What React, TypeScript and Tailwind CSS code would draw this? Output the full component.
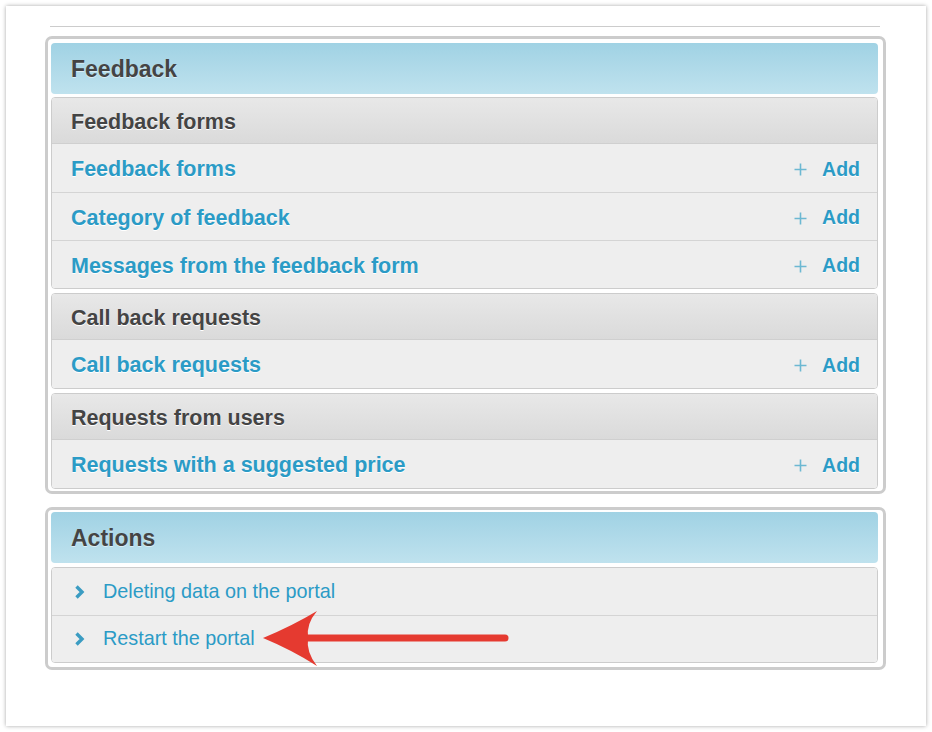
import React from "react";

const font = { fontFamily: '"Liberation Sans", Arial, sans-serif' };

function Plus() {
  return (
    <svg width="13" height="13" viewBox="0 0 13 13" className="mr-[15px]">
      <path d="M6.5 0.5V12.5M0.5 6.5H12.5" stroke="#6cb8d2" strokeWidth="1.6" fill="none" />
    </svg>
  );
}

function Chevron() {
  return (
    <svg width="11" height="16" viewBox="0 0 11 16" className="ml-[3px] mr-[18px]">
      <path d="M2.5 2.5L8 8L2.5 13.5" stroke="#3b9cc2" strokeWidth="3.4" fill="none" strokeLinejoin="miter" />
    </svg>
  );
}

function LinkRow({ label, first }: { label: string; first?: boolean }) {
  return (
    <div
      className={
        "h-[48px] flex items-center justify-between pt-[3px] pl-[19px] pr-[17px] bg-[#eeeeee] " +
        (first ? "" : "border-t border-[#d4d4d4]")
      }
    >
      <span className="text-[21.5px] font-bold text-[#2b9bc6] [text-shadow:0_1px_0_#fff]">{label}</span>
      <span className="flex items-center">
        <Plus />
        <span className="text-[19.5px] font-bold text-[#2b9bc6] [text-shadow:0_1px_0_#fff]">Add</span>
      </span>
    </div>
  );
}

function SubSection({ title, rows }: { title: string; rows: string[] }) {
  return (
    <div className="border border-[#cccccc] rounded-[4px] overflow-hidden">
      <div className="h-[46px] flex items-center pt-[4px] pl-[19px] bg-gradient-to-b from-[#e8e8e8] to-[#dadada] border-b border-[#cfcfcf]">
        <span className="text-[21.5px] font-bold text-[#444444] [text-shadow:0_1px_0_#fff]">{title}</span>
      </div>
      {rows.map((r, i) => (
        <LinkRow key={r} label={r} first={i === 0} />
      ))}
    </div>
  );
}

function PanelHeader({ title }: { title: string }) {
  return (
    <div className="h-[51px] flex items-center pt-[2px] pl-[20px] rounded-[4px] bg-gradient-to-b from-[#a0d2e4] to-[#bfe2ee]">
      <span className="text-[23px] font-bold text-[#444444] [text-shadow:0_1px_0_rgba(255,255,255,0.5)]">{title}</span>
    </div>
  );
}

function ActionRow({ label, first }: { label: string; first?: boolean }) {
  return (
    <div
      className={
        "h-[47px] flex items-center pl-[19px] bg-[#eeeeee] " + (first ? "" : "border-t border-[#d4d4d4]")
      }
    >
      <Chevron />
      <span className="text-[19.8px] text-[#2b9bc6]">{label}</span>
    </div>
  );
}

export default function App() {
  return (
    <div className="relative w-[932px] h-[732px] bg-white p-[6px]" style={font}>
      <div className="w-[920px] h-[720px] bg-white shadow-[0_0_4px_rgba(0,0,0,0.35)] pt-[20px] pl-[39px]">
        <div className="w-[830px] ml-[5px] h-px bg-[#cccccc]" />
        <div className="mt-[9px] w-[841px] border-[3px] border-[#cccccc] rounded-[7px] pt-[4px] pl-[3px] pr-[5px] pb-[2px] bg-white">
          <PanelHeader title="Feedback" />
          <div className="mt-[3px] flex flex-col gap-[4px]">
            <SubSection
              title="Feedback forms"
              rows={["Feedback forms", "Category of feedback", "Messages from the feedback form"]}
            />
            <SubSection title="Call back requests" rows={["Call back requests"]} />
            <SubSection title="Requests from users" rows={["Requests with a suggested price"]} />
          </div>
        </div>
        <div className="mt-[13px] w-[841px] border-[3px] border-[#cccccc] rounded-[7px] pt-[2px] pl-[3px] pr-[5px] pb-[4px] bg-white">
          <PanelHeader title="Actions" />
          <div className="mt-[4px] border border-[#cccccc] rounded-[4px] overflow-hidden">
            <ActionRow label="Deleting data on the portal" first />
            <ActionRow label="Restart the portal" />
          </div>
        </div>
      </div>
      <svg className="absolute left-0 top-0 pointer-events-none" width="932" height="732" viewBox="0 0 932 732">
        <line x1="306" y1="638" x2="505" y2="638" stroke="#e53a30" strokeWidth="7" strokeLinecap="round" />
        <path d="M263 638 Q292 626 317 611 Q306 624 308 638 Q306 652 317 666 Q292 650 263 638 Z" fill="#e53a30" />
      </svg>
    </div>
  );
}
